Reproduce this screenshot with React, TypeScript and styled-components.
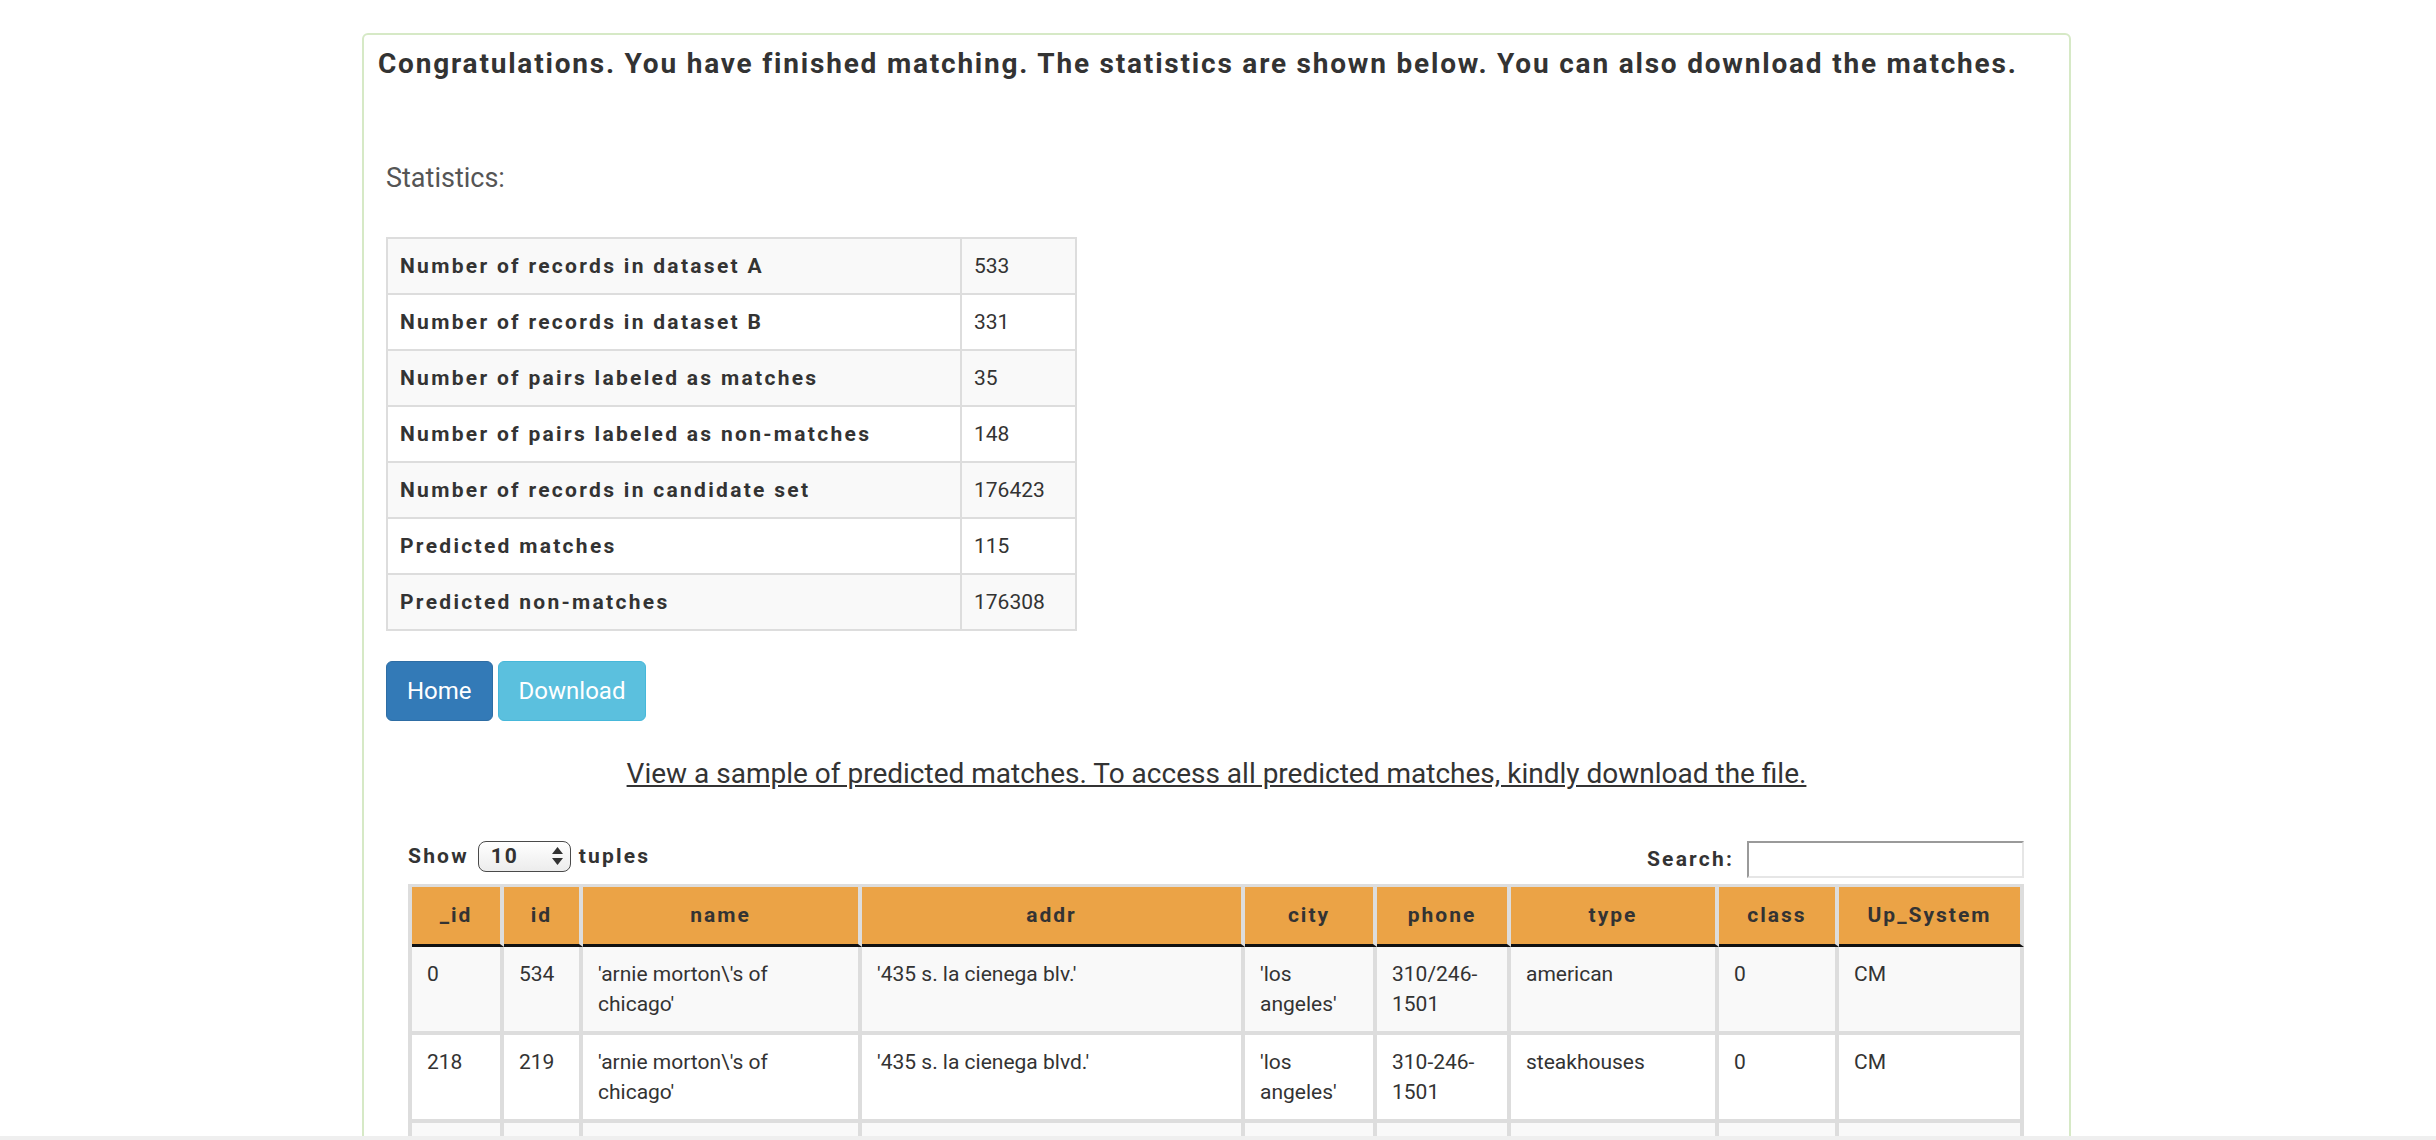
import React from "react";
import styled, { createGlobalStyle } from "styled-components";

const GlobalStyle = createGlobalStyle`
  html, body {
    margin: 0;
    padding: 0;
    overflow: hidden;
    background: #ffffff;
  }
  body {
    padding-right: 3px;
    font-family: Roboto, "Helvetica Neue", Arial, sans-serif;
    color: #333333;
  }
  *, *::before, *::after {
    box-sizing: border-box;
  }
`;

const Panel = styled.div`
  width: 1709px;
  min-height: 1200px;
  margin: 33px auto 0;
  border: 2px solid #d6e9c6;
  border-radius: 6px;
  background: #ffffff;
`;

const Heading = styled.h4`
  margin: 14px 0 0 14px;
  font-size: 28px;
  line-height: 30.8px;
  font-weight: 700;
  letter-spacing: 1.8px;
  color: #333333;
`;

const StatsSection = styled.section`
  margin: 79px 0 0 22px;
  display: flex;
  flex-direction: column;
  align-items: flex-start;
`;

const StatsTitle = styled.div`
  font-size: 27px;
  line-height: 38.6px;
  color: #555555;
`;

const StatsTable = styled.table`
  margin-top: 40px;
  width: 691px;
  border-collapse: collapse;
  font-size: 21px;
  line-height: 30px;
  color: #333333;
`;

const StatsRow = styled.tr<{ $striped: boolean }>`
  background: ${(p) => (p.$striped ? "#f9f9f9" : "#ffffff")};
`;

const StatLabel = styled.td`
  width: 574px;
  padding: 12px;
  border: 2px solid #dddddd;
  font-weight: 700;
  letter-spacing: 2.3px;
`;

const StatValue = styled.td`
  padding: 12px;
  border: 2px solid #dddddd;
`;

const ButtonRow = styled.div`
  margin-top: 30px;
  display: flex;
  gap: 5px;
`;

const Button = styled.button<{ $variant: "primary" | "info" }>`
  font-family: Roboto, "Helvetica Neue", Arial, sans-serif;
  font-size: 24px;
  line-height: 34px;
  padding: 12px 20px;
  border-radius: 6px;
  color: #ffffff;
  cursor: pointer;
  background: ${(p) => (p.$variant === "primary" ? "#337ab7" : "#5bc0de")};
  border: 1px solid ${(p) => (p.$variant === "primary" ? "#2e6da4" : "#46b8da")};
`;

const SampleLink = styled.a`
  display: block;
  margin-top: 34px;
  text-align: center;
  font-size: 28px;
  line-height: 38.6px;
  color: #333333;
  text-decoration: underline;
  cursor: pointer;
`;

const DataSection = styled.section`
  margin-top: 47px;
  padding: 0 45px 0 44px;
`;

const Controls = styled.div`
  display: flex;
  justify-content: space-between;
  align-items: flex-start;
  margin-bottom: 6px;
`;

const ControlGroup = styled.label`
  display: flex;
  align-items: center;
  font-size: 21px;
  line-height: 30px;
  font-weight: 700;
  letter-spacing: 2.2px;
  color: #333333;
`;

const SelectWrap = styled.span`
  position: relative;
  display: inline-flex;
  width: 93px;
  height: 31px;
  margin: 0 8px 0 9px;
`;

const Select = styled.select`
  appearance: none;
  -webkit-appearance: none;
  width: 100%;
  height: 100%;
  padding: 0 0 0 12px;
  border: 1.5px solid #4a4a4a;
  border-radius: 8px;
  background: linear-gradient(#ffffff, #ececec);
  font-family: Roboto, "Helvetica Neue", Arial, sans-serif;
  font-size: 21px;
  font-weight: 700;
  letter-spacing: 2px;
  color: #333333;
`;

const Arrows = styled.svg`
  position: absolute;
  right: 8px;
  top: 6px;
  pointer-events: none;
`;

const SearchInput = styled.input`
  width: 277px;
  height: 37px;
  margin-left: 13px;
  border-style: solid;
  border-width: 2px;
  border-color: #9a9a9a #e6e6e6 #e6e6e6 #9a9a9a;
  background: #ffffff;
  font-size: 21px;
`;

const DataTable = styled.table`
  width: 100%;
  table-layout: fixed;
  border-collapse: separate;
  border-spacing: 0;
  border-left: 4px solid #dddddd;
  border-top: 3px solid #dddddd;
  font-size: 21px;
  line-height: 30px;
  color: #333333;
`;

const Col = styled.col<{ $w: number }>`
  width: ${(p) => p.$w}px;
`;

const Th = styled.th`
  background: #eba346;
  padding: 13px 6px 14px;
  border-right: 4px solid #dddddd;
  border-bottom: 3px solid #111111;
  font-weight: 700;
  letter-spacing: 2px;
  text-align: center;
  color: #333333;
`;

const DataRow = styled.tr<{ $striped: boolean }>`
  background: ${(p) => (p.$striped ? "#f9f9f9" : "#ffffff")};
`;

const Td = styled.td`
  padding: 12px 15px;
  border-right: 4px solid #dddddd;
  border-bottom: 4px solid #dddddd;
  vertical-align: top;
  text-align: left;
  word-wrap: break-word;
`;

const ScrollTrack = styled.div`
  position: fixed;
  left: 0;
  right: 0;
  bottom: 0;
  height: 4px;
  background: #efefef;
`;

const stats: [string, string][] = [
  ["Number of records in dataset A", "533"],
  ["Number of records in dataset B", "331"],
  ["Number of pairs labeled as matches", "35"],
  ["Number of pairs labeled as non-matches", "148"],
  ["Number of records in candidate set", "176423"],
  ["Predicted matches", "115"],
  ["Predicted non-matches", "176308"],
];

const columns: { key: string; w: number }[] = [
  { key: "_id", w: 92 },
  { key: "id", w: 79 },
  { key: "name", w: 279 },
  { key: "addr", w: 383 },
  { key: "city", w: 132 },
  { key: "phone", w: 134 },
  { key: "type", w: 208 },
  { key: "class", w: 120 },
  { key: "Up_System", w: 185 },
];

const rows: string[][] = [
  ["0", "534", "'arnie morton\\'s of chicago'", "'435 s. la cienega blv.'", "'los angeles'", "310/246-1501", "american", "0", "CM"],
  ["218", "219", "'arnie morton\\'s of chicago'", "'435 s. la cienega blvd.'", "'los angeles'", "310-246-1501", "steakhouses", "0", "CM"],
  ["1", "535", "'art\\'s delicatessen'", "'12224 ventura blvd.'", "'studio city'", "818/762-1221", "american", "0", "CM"],
  ["219", "220", "'art\\'s deli'", "'12224 ventura blvd.'", "'studio city'", "818-762-1221", "delis", "0", "CM"],
];

export default function App() {
  return (
    <>
      <GlobalStyle />
      <Panel>
        <Heading>
          Congratulations. You have finished matching. The statistics are shown below. You can also download the matches.
        </Heading>
        <StatsSection>
          <StatsTitle>Statistics:</StatsTitle>
          <StatsTable>
            <tbody>
              {stats.map(([label, value], i) => (
                <StatsRow key={label} $striped={i % 2 === 0}>
                  <StatLabel>{label}</StatLabel>
                  <StatValue>{value}</StatValue>
                </StatsRow>
              ))}
            </tbody>
          </StatsTable>
          <ButtonRow>
            <Button $variant="primary">Home</Button>
            <Button $variant="info">Download</Button>
          </ButtonRow>
        </StatsSection>
        <SampleLink>
          View a sample of predicted matches. To access all predicted matches, kindly download the file.
        </SampleLink>
        <DataSection>
          <Controls>
            <ControlGroup>
              Show
              <SelectWrap>
                <Select defaultValue="10">
                  <option value="10">10</option>
                  <option value="25">25</option>
                  <option value="50">50</option>
                  <option value="100">100</option>
                </Select>
                <Arrows width="11" height="18" viewBox="0 0 11 18">
                  <polygon points="5.5,0 11,7 0,7" fill="#333" />
                  <polygon points="0,11 11,11 5.5,18" fill="#333" />
                </Arrows>
              </SelectWrap>
              tuples
            </ControlGroup>
            <ControlGroup>
              Search:
              <SearchInput type="text" />
            </ControlGroup>
          </Controls>
          <DataTable>
            <colgroup>
              {columns.map((c) => (
                <Col key={c.key} $w={c.w} />
              ))}
            </colgroup>
            <thead>
              <tr>
                {columns.map((c) => (
                  <Th key={c.key}>{c.key}</Th>
                ))}
              </tr>
            </thead>
            <tbody>
              {rows.map((r, i) => (
                <DataRow key={i} $striped={i % 2 === 0}>
                  {r.map((cell, j) => (
                    <Td key={j}>{cell}</Td>
                  ))}
                </DataRow>
              ))}
            </tbody>
          </DataTable>
        </DataSection>
      </Panel>
      <ScrollTrack />
    </>
  );
}
